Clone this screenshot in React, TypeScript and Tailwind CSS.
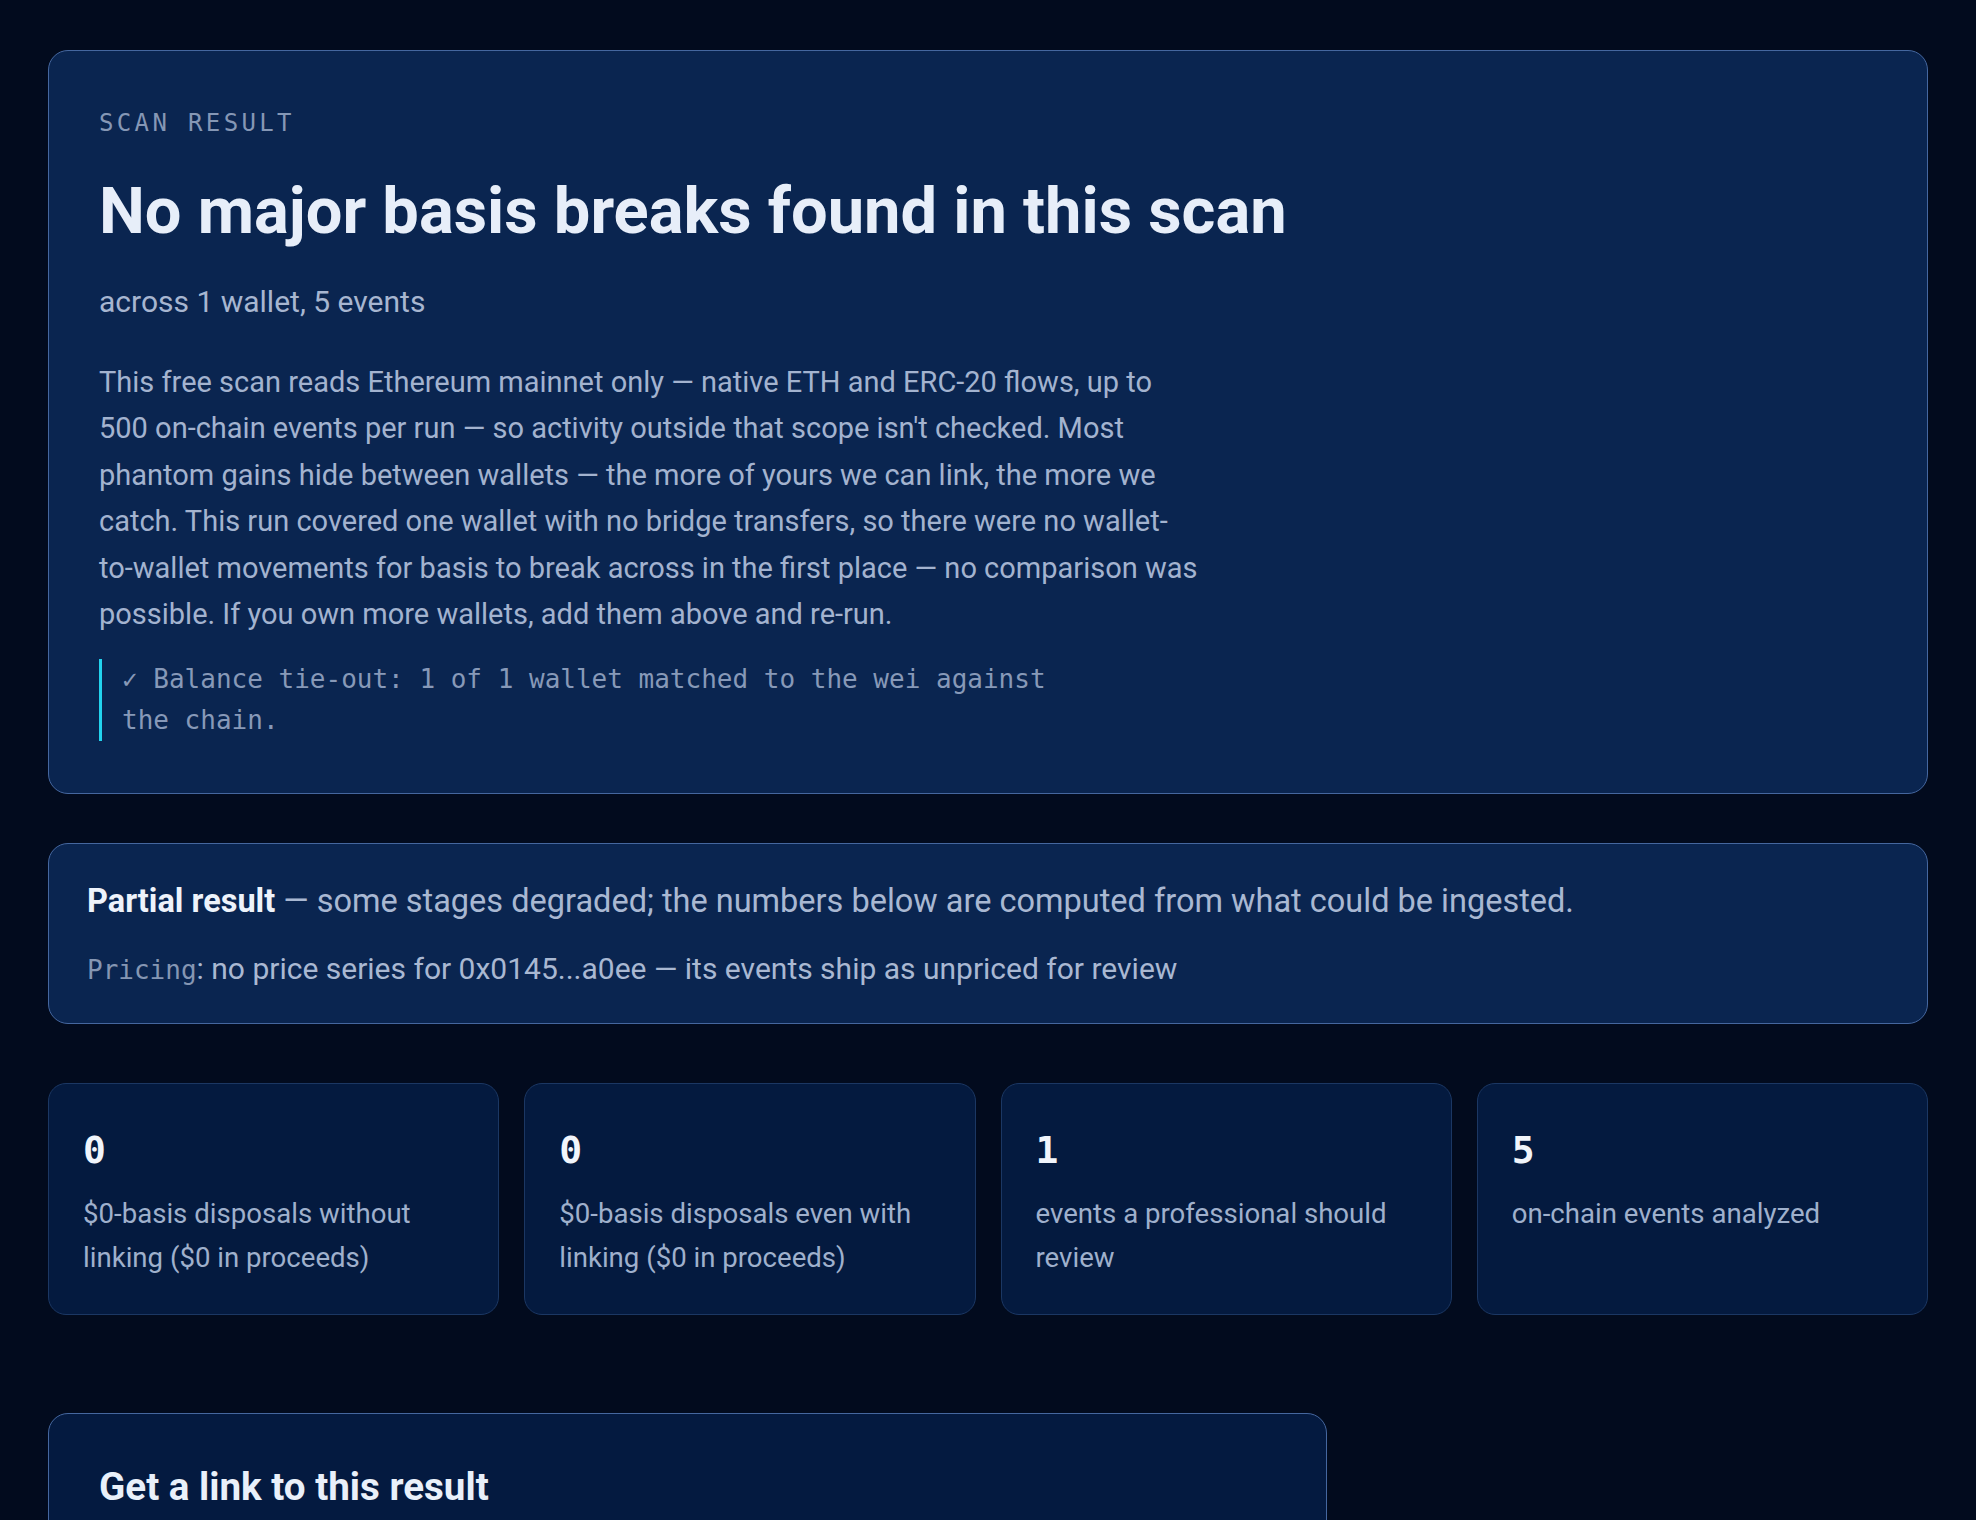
import React from 'react';

const MONO = "font-['DejaVu_Sans_Mono','Liberation_Mono',monospace]";

type Stat = { value: string; label: string };

const STATS: Stat[] = [
  { value: '0', label: '$0-basis disposals without linking ($0 in proceeds)' },
  { value: '0', label: '$0-basis disposals even with linking ($0 in proceeds)' },
  { value: '1', label: 'events a professional should review' },
  { value: '5', label: 'on-chain events analyzed' },
];

const StatCard: React.FC<{ stat: Stat }> = ({ stat }) => (
  <div className="rounded-[18px] border border-[#1b3763] bg-[#041a3f] p-[34px]">
    <div className={`${MONO} text-[38px] leading-[64px] font-bold text-[#f1f5fb]`}>{stat.value}</div>
    <p className="mt-[10px] text-[27.6px] leading-[44px] text-[#9fb0cc]">{stat.label}</p>
  </div>
);

const App: React.FC = () => {
  return (
    <div className="min-h-screen bg-[#020b1e] px-12 pt-[50px] pb-24 font-['Roboto','Liberation_Sans',sans-serif]">
      {/* headline result */}
      <section className="rounded-[20px] border border-[#45679f] bg-[#0a2550] px-[50px] pt-[56px] pb-[52px]">
        <div className={`${MONO} text-[24px] leading-8 tracking-[0.14em] text-[#8597b5]`}>SCAN RESULT</div>
        <h1 className="mt-[37px] text-[65px] leading-[71px] font-bold text-[#e7eef9]">
          No major basis breaks found in this scan
        </h1>
        <p className="mt-[34px] text-[30px] leading-[42px] text-[#a7b6d0]">across 1 wallet, 5 events</p>
        <p className="mt-[36px] max-w-[1100px] text-[29px] leading-[46.4px] text-[#a3b3cf]">
          This free scan reads Ethereum mainnet only — native ETH and ERC-20 flows, up to 500 on-chain events per
          run — so activity outside that scope isn't checked. Most phantom gains hide between wallets — the more of
          yours we can link, the more we catch. This run covered one wallet with no bridge transfers, so there were no
          wallet-to-wallet movements for basis to break across in the first place — no comparison was possible. If you
          own more wallets, add them above and re-run.
        </p>
        <div
          className={`${MONO} mt-[22px] max-w-[980px] border-l-[3px] border-[#22d3ee] pl-[20px] text-[26px] leading-[41px] text-[#8799b8]`}
        >
          ✓ Balance tie-out: 1 of 1 wallet matched to the wei against the chain.
        </div>
      </section>

      {/* degraded stages notice */}
      <section className="mt-[49px] rounded-[20px] border border-[#45679f] bg-[#0a2550] px-[38px] pt-[34px] pb-[33px]">
        <p className="text-[32.5px] leading-[46px] text-[#a9b8d2]">
          <strong className="font-bold text-[#eef3fb]">Partial result</strong> — some stages degraded; the numbers
          below are computed from what could be ingested.
        </p>
        <p className="mt-[25px] text-[30px] leading-[40px] text-[#a9b8d2]">
          <span className={`${MONO} text-[26px] text-[#8596b3]`}>Pricing</span>: no price series for 0x0145...a0ee —
          its events ship as unpriced for review
        </p>
      </section>

      <div className="mt-[59px] grid grid-cols-4 gap-[25px]">
        {STATS.map((s, i) => (
          <StatCard key={i} stat={s} />
        ))}
      </div>

      {/* share link */}
      <section className="mt-[98px] w-[1279px] rounded-[20px] border border-[#45679f] bg-[#041a40] px-[50px] pt-[49px] pb-[60px]">
        <h2 className="text-[38.6px] leading-[48px] font-bold text-[#e9f0fa]">Get a link to this result</h2>
      </section>
    </div>
  );
};

export default App;
